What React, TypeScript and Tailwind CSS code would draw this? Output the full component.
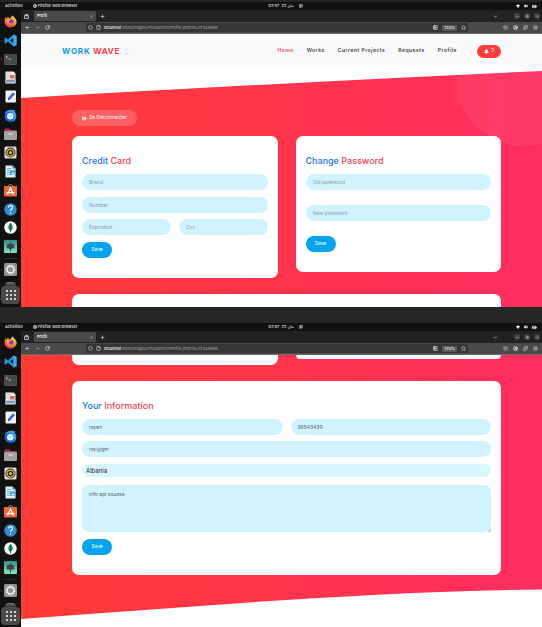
import type { ReactNode } from "react";
import {
  ArrowLeft,
  ArrowRight,
  BatteryCharging,
  ChevronDown,
  CircleUserRound,
  Copy,
  File,
  Globe,
  Menu,
  MessageSquareText,
  Minus,
  NotebookText,
  Plus,
  Puzzle,
  RotateCw,
  Shield,
  ShieldCheck,
  Star,
  Volume2,
  X,
} from "lucide-react";
import { FaBell, FaSignOutAlt } from "react-icons/fa";

/* ---------- Dock ---------- */

function DockIcon({ children, dots = 0 }: { children: ReactNode; dots?: number }) {
  return (
    <li className="relative flex justify-center">
      {dots > 0 && (
        <span className="absolute top-0 left-px flex h-full flex-col justify-center gap-px">
          {Array.from({ length: dots }, (_, i) => (
            <i key={i} className="size-px rounded-full bg-[#e6304a]" />
          ))}
        </span>
      )}
      <svg viewBox="0 0 26 26" className="size-[13px]">
        {children}
      </svg>
    </li>
  );
}

function Dock() {
  return (
    <aside className="flex w-[21px] shrink-0 flex-col bg-[#111111] pt-[5px]">
      <svg width="0" height="0" className="absolute">
        <defs>
          <linearGradient id="fox" x1="0.8" y1="0" x2="0.2" y2="1">
            <stop offset="0" stopColor="#ffe14a" />
            <stop offset="0.5" stopColor="#ff8a16" />
            <stop offset="1" stopColor="#f5156c" />
          </linearGradient>
          <linearGradient id="sea" x1="0" y1="0" x2="0" y2="1">
            <stop offset="0" stopColor="#2f8f8f" />
            <stop offset="1" stopColor="#7fe8ba" />
          </linearGradient>
        </defs>
      </svg>
      <ul className="flex h-[238px] flex-col justify-between">
        <DockIcon>
          <path d="M13 25C6 25 1 20 1 13c0-4 1-7 3-9l1 4c1-2 2-3 3-5l2 4h3c1-3 2-5 5-6 0 3 5 5 6 8 4 8-2 16-11 16z" fill="url(#fox)" />
          <circle cx="13.500" cy="13.500" r="5.500" fill="#7a3fe0" />
          <path d="M5 10c3-3 6-3 10-1-2 1-4 1-4 3-2 1-2 4 1 5 3 1 5-1 7-2-1 5-6 7-10 4-3-2-4-5-4-9z" fill="#ff9a1c" />
        </DockIcon>
        <DockIcon dots={1}>
          <path d="M19 1l6 3v18l-6 3L8 15l-5 4-2-1V8l2-1 5 4zM19 8l-7 5 7 5z" fill="#2196e0" fillRule="evenodd" />
          <path d="M19 1l6 3v18l-6 3z" fill="#3aaef5" />
        </DockIcon>
        <DockIcon dots={2}>
          <rect x="0" y="2" width="26" height="22" rx="2" fill="#555" />
          <rect x="1" y="3" width="24" height="19" rx="1" fill="#474747" />
          <path d="M4 6l3 2.500L4 11M9 12h5" stroke="#ddd" strokeWidth="1.500" fill="none" />
        </DockIcon>
        <DockIcon>
          <path d="M3 1h16l4 4v20H3z" fill="#ececec" />
          <path d="M12 8h9v7h-9z" fill="#e56a5c" />
          <path d="M5 9h6M5 12h6M5 5h10" stroke="#bbb" strokeWidth="1.500" />
          <path d="M2 17h22v6H2z" fill="#9ab2c8" />
          <path d="M5 20h15" stroke="#4e6f90" strokeWidth="2" strokeDasharray="3 1" />
        </DockIcon>
        <DockIcon>
          <rect x="3" y="1" width="21" height="24" rx="2" fill="#f2f2f2" />
          <path d="M18 5l4 3-9 10-5 2 1-5z" fill="#2f65d8" />
          <path d="M8 20l1-4 3 3z" fill="#333" />
        </DockIcon>
        <DockIcon>
          <circle cx="13" cy="14" r="12" fill="#1467d6" />
          <path d="M1 10C4 2 14 0 24 3c-3 0-4 1-3 3 5 6 4 15-3 19C24 14 18 5 9 6 5 7 3 8 1 10z" fill="#35a4f3" />
          <circle cx="12.500" cy="14.500" r="6.500" fill="#e9f5ff" />
          <path d="M7 12l6 4 6-5" stroke="#8bbbe8" fill="none" strokeWidth="1.500" />
        </DockIcon>
        <DockIcon>
          <path d="M1 3c0-1 1-2 2-2h8l2 3h11c1 0 1 1 1 2v5H1z" fill="#b3294e" />
          <rect x="0" y="6" width="26" height="18" rx="2" fill="#a1a1a1" />
          <path d="M9 12h8" stroke="#eee" strokeWidth="2" />
        </DockIcon>
        <DockIcon>
          <rect x="1" y="1" width="24" height="24" rx="3" fill="#e8e2d2" />
          <circle cx="13" cy="13" r="10" fill="#262626" />
          <circle cx="13" cy="13" r="7" fill="none" stroke="#ecc13a" strokeWidth="2.500" />
          <circle cx="13" cy="13" r="3" fill="#ecc13a" />
        </DockIcon>
        <DockIcon>
          <path d="M3 1h14l6 6v18H3z" fill="#d9eff8" />
          <path d="M17 1l6 6h-6z" fill="#2788b8" />
          <path d="M6 7h8M6 11h6M6 15h5M6 19h5" stroke="#3a9bc8" strokeWidth="1.500" />
          <path d="M12 11h12v9H12z" fill="#3f9fca" />
          <path d="M14 19l3-5 3 3 2-2v4z" fill="#d9eff8" />
        </DockIcon>
        <DockIcon>
          <path d="M8 7c0-8 10-8 10 0" stroke="#bdbdbd" strokeWidth="1.500" fill="none" />
          <path d="M0 4h26v19c0 1-1 2-2 2H2c-1 0-2-1-2-2z" fill="#ec6a35" />
          <path d="M7 21l6-13 6 13M5 17h16" stroke="#fff" strokeWidth="2.500" fill="none" />
        </DockIcon>
        <DockIcon>
          <circle cx="13" cy="13" r="12.500" fill="#318ad6" />
          <path d="M9 9c0-5 8-5 8 0 0 3-4 3-4 7" stroke="#fff" strokeWidth="2.200" fill="none" />
          <circle cx="13" cy="20" r="1.500" fill="#fff" />
        </DockIcon>
        <DockIcon>
          <circle cx="13" cy="13" r="12.500" fill="#fff" />
          <path d="M13 4c6 6 6 12 0 16-6-4-6-10 0-16z" fill="#13945a" />
          <path d="M13 5v18" stroke="#0b4c34" strokeWidth="1.500" />
        </DockIcon>
        <DockIcon>
          <rect x="0" y="0" width="26" height="26" rx="2" fill="url(#sea)" />
          <path d="M13 5l4 3 4 1-1 4 1 3-5 1-3 3-3-3-5-1 1-3-1-4 4-1z" fill="#3d4446" />
          <path d="M13 14v11" stroke="#3d4446" strokeWidth="1.500" />
        </DockIcon>
      </ul>
      <hr className="mx-1 mt-[5px] border-[#2c2c2c]" />
      <ul className="mt-1">
        <DockIcon dots={1}>
          <rect x="0" y="0" width="26" height="26" rx="3" fill="#929292" />
          <circle cx="13" cy="13" r="7" fill="none" stroke="#f1f1f1" strokeWidth="3" />
          <circle cx="13" cy="13" r="9" fill="none" stroke="#f1f1f1" strokeWidth="2" strokeDasharray="2.500 3" />
        </DockIcon>
      </ul>
      <div className="mx-[5px] mt-[6px] h-1 rounded-t-sm bg-linear-to-b from-[#777] to-[#333]" />
      <button aria-label="Show applications" className="mx-px flex h-[18px] items-center justify-center rounded bg-[#4a4a4a]">
        <svg viewBox="0 0 10 10" className="size-2.5" fill="#fff">
          {[1, 5, 9].map((y) => [1, 5, 9].map((x) => <circle key={`${x}-${y}`} cx={x} cy={y} r="1" />))}
        </svg>
      </button>
    </aside>
  );
}

/* ---------- Desktop and browser chrome ---------- */

function SystemBar() {
  return (
    <header className="grid h-2 grid-cols-[9fr_auto_8fr] items-center bg-[#111111] px-[5px] text-[4px] leading-none font-medium text-[#e2e2e2]">
      <div className="flex items-center gap-2.5">
        <span>Activities</span>
        <span className="flex items-center gap-px">
          <Globe className="size-1" strokeWidth={3} />
          Firefox Web Browser
        </span>
      </div>
      <div className="flex items-center gap-[5px]">
        <span className="font-['Inter','DejaVu_Sans',sans-serif]">02:57 &nbsp;22 ماي</span>
        <MessageSquareText className="size-1" strokeWidth={3} />
      </div>
      <div className="flex items-center justify-end gap-1 text-white">
        <svg viewBox="0 0 10 10" className="size-1" fill="currentColor">
          <path d="M0 3Q5-1 10 3L5 10z" />
        </svg>
        <Volume2 className="size-1" fill="currentColor" strokeWidth={3} />
        <BatteryCharging className="size-[5px]" fill="currentColor" strokeWidth={3} />
      </div>
    </header>
  );
}

function BrowserBars() {
  return (
    <div className="text-[#dedede]">
      <div className="flex h-3 items-center bg-[#222222] pr-0.5 pl-[3px]">
        <svg viewBox="0 0 10 10" className="size-[5px]" fill="none" stroke="currentColor" strokeWidth="1.500">
          <path d="M1 3h8v6H1zM2 1h6M4 5l1 1 1-1" />
        </svg>
        <div className="ml-[5px] flex h-2.5 w-[62px] items-center justify-between rounded-[1px] bg-[#4a4a4a] px-[3px] text-[4px] font-medium text-white">
          Profil
          <button aria-label="Close tab"><X className="size-[3px]" strokeWidth={3} /></button>
        </div>
        <button aria-label="New tab" className="ml-1"><Plus className="size-[5px]" strokeWidth={3} /></button>
        <button aria-label="List tabs" className="mr-4 ml-auto"><ChevronDown className="size-[5px]" strokeWidth={3} /></button>
        <div className="flex gap-1">
          <button aria-label="Minimise" className="flex size-1.5 items-center justify-center rounded-full bg-[#444]"><Minus className="size-[3px]" strokeWidth={3} /></button>
          <button aria-label="Restore" className="flex size-1.5 items-center justify-center rounded-full bg-[#444]"><Copy className="size-[3px]" strokeWidth={3} /></button>
          <button aria-label="Close" className="flex size-1.5 items-center justify-center rounded-full bg-[#444]"><X className="size-[3px]" strokeWidth={3} /></button>
        </div>
      </div>
      <div className="flex h-3 items-center border-b border-[#6a6a6a] bg-[#4a4a4a] pr-1 pl-1">
        <div className="flex items-center gap-[5px]">
          <button aria-label="Back"><ArrowLeft className="block size-[5px]" strokeWidth={3} /></button>
          <button aria-label="Forward"><ArrowRight className="block size-[5px] text-[#858585]" strokeWidth={3} /></button>
          <button aria-label="Reload"><RotateCw className="block size-[5px]" strokeWidth={3} /></button>
        </div>
        <form className="mr-[35px] ml-9 flex h-[9px] flex-1 items-center rounded-[1px] bg-[#363636] px-0.5 text-[4px]">
          <Shield className="size-[5px]" strokeWidth={3} />
          <File className="mx-[3px] size-[5px]" strokeWidth={3} />
          <span className="font-medium text-[#f4f4f4]">localhost</span>
          <input aria-label="Address" defaultValue=":8000/Pages/Freelancer/Profile.php?id=12345680" className="min-w-0 flex-1 bg-transparent font-medium text-[#969696] outline-none" />
          <NotebookText className="size-[5px]" strokeWidth={3} />
          <span className="mx-1 rounded-[1px] bg-[#5a5a5a] px-0.5 leading-[6px] text-white">120%</span>
          <Star className="size-[5px]" strokeWidth={3} />
        </form>
        <div className="flex items-center gap-[5px]">
          <ShieldCheck className="size-[5px]" strokeWidth={3} />
          <CircleUserRound className="size-[5px]" strokeWidth={3} />
          <Puzzle className="size-[5px]" strokeWidth={3} />
          <Menu className="size-[5px]" strokeWidth={3} />
        </div>
      </div>
    </div>
  );
}

function Screen({ children }: { children: ReactNode }) {
  return (
    <section>
      <SystemBar />
      <div className="flex">
        <Dock />
        <div className="flex min-w-0 flex-1 flex-col">
          <BrowserBars />
          {children}
        </div>
      </div>
    </section>
  );
}

/* ---------- Site ---------- */

function Backdrop({ id, shape, height, circle }: { id: string; shape: string; height: number; circle?: boolean }) {
  return (
    <svg viewBox={`0 0 521 ${height}`} preserveAspectRatio="none" className="absolute inset-0 size-full">
      <defs>
        <linearGradient id={id}>
          <stop offset="0" stopColor="#ff3b36" />
          <stop offset="1" stopColor="#ff2d60" />
        </linearGradient>
      </defs>
      <path d={shape} fill={`url(#${id})`} />
      {circle && <path d="M436 41L521 37V109C490 119 455 104 436 66z" fill="#fff" fillOpacity="0.06" />}
    </svg>
  );
}

function Title({ first, second }: { first: string; second: string }) {
  return (
    <h2 className="mb-[5px] text-[9px] leading-4 font-medium text-[#ee4550]">
      <span className="text-[#1d74e8]">{first}</span> {second}
    </h2>
  );
}

const field =
  "block h-4 w-full min-w-0 rounded-full bg-[#d1f3ff] px-[7px] text-[5px] text-[#555f66] outline-none placeholder:text-[#8f9fa8]";

function Save() {
  return (
    <button className="h-4 w-[30px] self-start rounded-full bg-[#03a4ed] text-[5px] text-white">Save</button>
  );
}

const links = ["Home", "Works", "Current Projects", "Requests", "Profile"];

function TopOfPage() {
  return (
    <main className="relative bg-white">
      <Backdrop id="heroTop" height={273} shape="M0 64Q280 48 521 37V273H0z" circle />
      <nav className="relative flex h-[34px] items-center bg-[#fafafa] pr-[41px] pl-[41px] font-semibold">
        <a href="#home" className="text-[8px] font-bold tracking-widest text-[#ff3a45]">
          <span className="text-[#089de3]">WORK</span> WAVE
        </a>
        <div className="ml-auto flex gap-[13px] text-[5px] tracking-widest text-[#3c3c3c]">
          {links.map((link) => (
            <a key={link} href={`#${link}`} className={link === "Home" ? "text-[#ff4650]" : ""}>
              {link}
            </a>
          ))}
        </div>
        <button className="ml-5 flex h-[13px] w-6 items-center justify-center gap-0.5 rounded-full bg-[#ff3b3b] text-[5px] font-normal text-white">
          <FaBell />
          <span>3</span>
        </button>
      </nav>
      <div className="relative pt-[42px] pr-[41px] pl-[51px]">
        <button className="flex h-4 w-[65px] items-center justify-center gap-0.5 rounded-full bg-white/20 text-[5px] text-white">
          <FaSignOutAlt />
          Se Déconnecter
        </button>
        <div className="mt-2.5 grid grid-cols-2 items-start gap-[18px]">
          <form className="rounded-[7px] bg-white px-2.5 pt-[17px] pb-5">
            <Title first="Credit" second="Card" />
            <div className="flex h-[84px] flex-col justify-between">
              <input aria-label="Brand" placeholder="Brand" className={field} />
              <input aria-label="Number" placeholder="Number" className={field} />
              <div className="grid grid-cols-2 gap-2">
                <input aria-label="Expiration" placeholder="Expiration" className={field} />
                <input aria-label="Cvv" placeholder="Cvv" className={field} />
              </div>
              <Save />
            </div>
          </form>
          <form className="rounded-[7px] bg-white px-2.5 pt-[17px] pb-5">
            <Title first="Change" second="Password" />
            <div className="flex flex-col gap-[15px]">
              <input aria-label="Old password" placeholder="Old password" className={field} />
              <input aria-label="New password" placeholder="New password" className={field} />
              <Save />
            </div>
          </form>
        </div>
        <div className="mt-4 h-[13px] rounded-t-[7px] bg-white" />
      </div>
    </main>
  );
}

function BottomOfPage() {
  return (
    <main className="relative bg-white">
      <Backdrop id="heroBottom" height={272} shape="M0 0H521V234.500C350 236 170 252 0 264z" />
      <div className="relative pr-[41px] pb-[52px] pl-[51px]">
        <div className="grid grid-cols-2 items-start gap-[18px]">
          <div className="h-2.5 rounded-b-[7px] bg-white" />
          <div className="h-1 rounded-b-[7px] bg-white" />
        </div>
        <form className="mt-4 rounded-[7px] bg-white px-2.5 pt-[17px] pb-5">
          <Title first="Your" second="Information" />
          <div className="grid grid-cols-2 gap-2">
            <input aria-label="Name" defaultValue="rayen" className={field} />
            <input aria-label="Phone" defaultValue="99543439" className={field} />
          </div>
          <input aria-label="Email" defaultValue="ray@gm" className={`${field} mt-1.5`} />
          <select aria-label="Country" className="mt-[7px] block h-[13px] w-full appearance-none rounded-full bg-[#d9f5fe] px-1 text-[6px] text-[#222]">
            <option>Albania</option>
          </select>
          <div className="relative mt-2">
            <textarea
              aria-label="Information"
              defaultValue="info epi soussa"
              className="block h-[47px] w-full resize-none rounded-[7px] bg-[#d1f3ff] px-[7px] py-[5px] text-[5px] leading-2 text-[#555f66] outline-none"
            />
            <svg viewBox="0 0 6 6" className="absolute right-0 bottom-0 size-[3px]" stroke="#666" fill="none">
              <path d="M0 6L6 0M3 6l3-3" />
            </svg>
          </div>
          <div className="mt-[7px] flex">
            <Save />
          </div>
        </form>
      </div>
    </main>
  );
}

export default function App() {
  return (
    <div className="bg-[#262626] pt-0.5 font-['Inter','Liberation_Sans',sans-serif]">
      <Screen>
        <TopOfPage />
      </Screen>
      <div className="h-4" />
      <Screen>
        <BottomOfPage />
      </Screen>
    </div>
  );
}
